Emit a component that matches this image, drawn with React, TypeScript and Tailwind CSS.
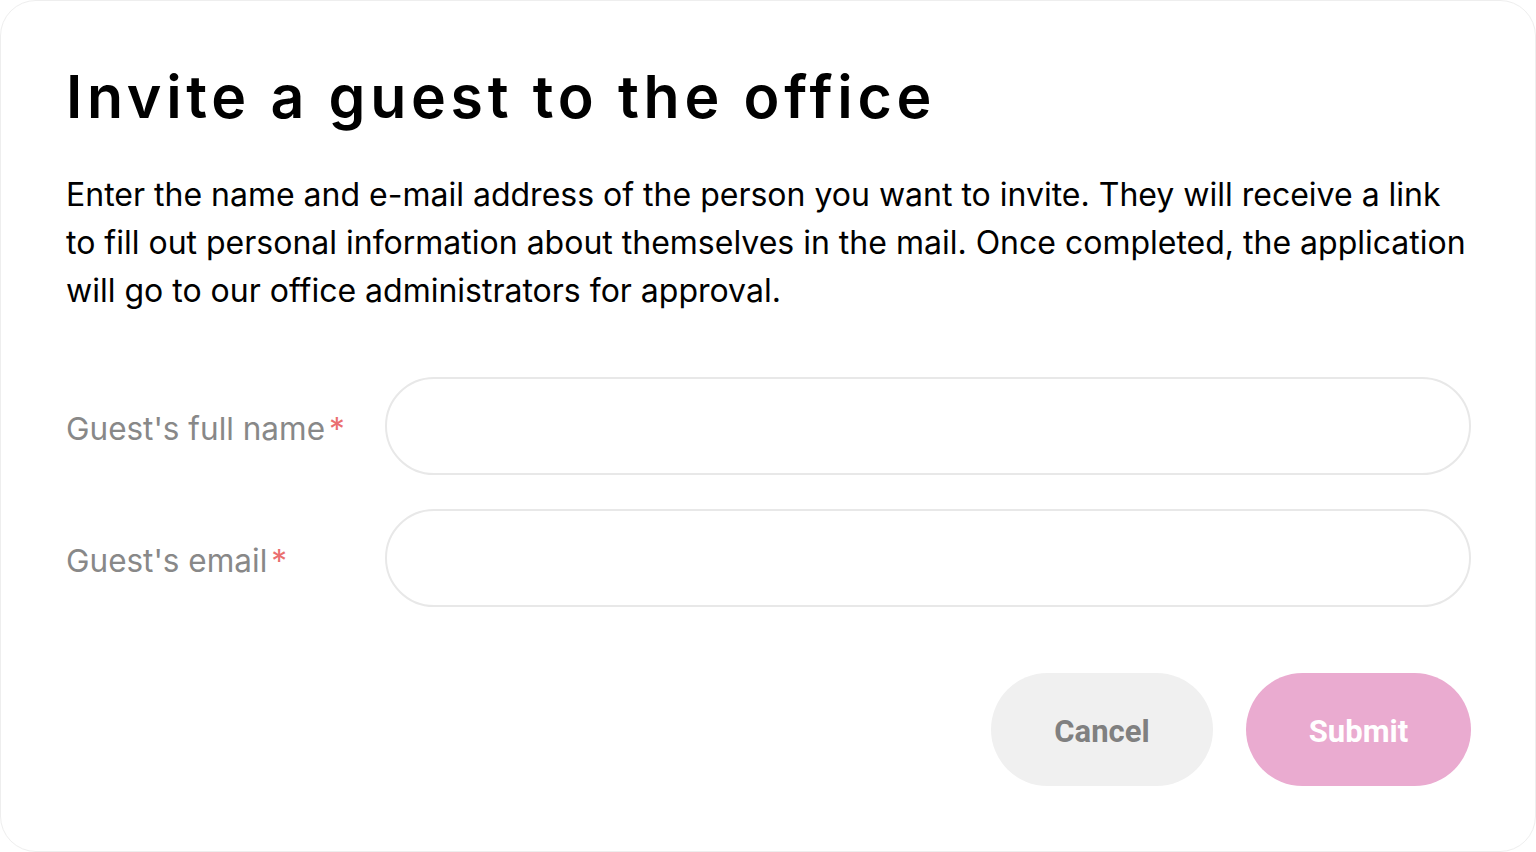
export default function App() {
  return (
    <div className="w-[1536px] h-[852px] bg-white">
      <div className="w-[1536px] h-[852px] box-border rounded-[36px] border border-[#eeeeee] bg-white pl-[65px] pr-[64px] pt-[61px]">
        <h1 className="font-['Inter',sans-serif] font-semibold text-[59px] leading-[70px] text-black tracking-[4.7px] whitespace-nowrap">
          Invite a guest to the office
        </h1>
        <p className="mt-[39px] font-['Inter',sans-serif] text-[32px] leading-[48px] text-black">
          Enter the name and e-mail address of the person you want to invite. They will receive a link to fill out personal information about themselves in the mail. Once completed, the application will go to our office administrators for approval.
        </p>
        <div className="mt-[62px] flex flex-col gap-[34px]">
          <div className="flex items-center">
            <label className="w-[319px] pt-[6px] font-['Inter',sans-serif] text-[31.5px] text-[#888888]">
              Guest's full name<span className="text-[#ea6f6f] ml-[4px]">*</span>
            </label>
            <input className="flex-1 h-[98px] rounded-full border-2 border-[#e8e8e8] outline-none px-8" />
          </div>
          <div className="flex items-center">
            <label className="w-[319px] pt-[6px] font-['Inter',sans-serif] text-[31.5px] text-[#888888]">
              Guest's email<span className="text-[#ea6f6f] ml-[4px]">*</span>
            </label>
            <input className="flex-1 h-[98px] rounded-full border-2 border-[#e8e8e8] outline-none px-8" />
          </div>
        </div>
        <div className="mt-[66px] flex justify-end gap-[33px]">
          <button className="w-[222px] h-[113px] pt-[6px] rounded-full bg-[#f0f0f0] text-[#808080] font-['Roboto',sans-serif] font-bold text-[31px]">
            Cancel
          </button>
          <button className="w-[225px] h-[113px] pt-[6px] rounded-full bg-[#eaabd0] text-white font-['Roboto',sans-serif] font-bold text-[31px]">
            Submit
          </button>
        </div>
      </div>
    </div>
  );
}
